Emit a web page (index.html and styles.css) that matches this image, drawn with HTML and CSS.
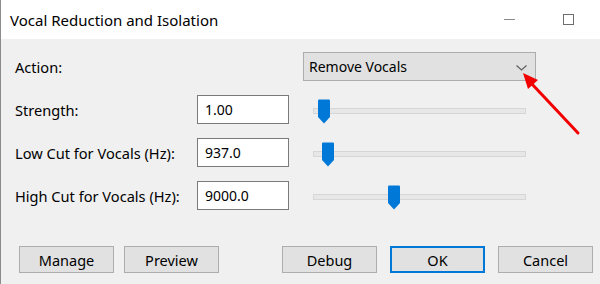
FILE: index.html
```html
<!DOCTYPE html>
<html lang="en">
<head>
  <meta charset="UTF-8">
  <title>Vocal Reduction and Isolation</title>
  <link rel="stylesheet" href="styles.css">
</head>
<body>
  <div class="dialog">
    <!-- Title bar -->
    <div class="titlebar">
      <span class="title">Vocal Reduction and Isolation</span>
      <span class="win-btn minimize"></span>
      <span class="win-btn maximize"></span>
    </div>

    <!-- Settings -->
    <div class="settings">
      <label class="label">Action:</label>
      <div class="select">
        <span>Remove Vocals</span>
        <svg class="chevron" width="11" height="6" viewBox="0 0 11 6">
          <path d="M0.5 0.5 L5.5 5 L10.5 0.5" fill="none" stroke="#606060" stroke-width="1.2"/>
        </svg>
      </div>

      <label class="label">Strength:</label>
      <input class="field" type="text" value="1.00">
      <div class="slider">
        <div class="track"></div>
        <svg class="thumb" style="left: 4px" width="14" height="25" viewBox="0 0 14 25"><path d="M1 1.5 Q1 0.5 2 0.5 H12 Q13 0.5 13 1.5 V18 L7 24.5 L1 18 Z" fill="#0078d7"/></svg>
      </div>

      <label class="label">Low Cut for Vocals (Hz):</label>
      <input class="field" type="text" value="937.0">
      <div class="slider">
        <div class="track"></div>
        <svg class="thumb" style="left: 8px" width="14" height="25" viewBox="0 0 14 25"><path d="M1 1.5 Q1 0.5 2 0.5 H12 Q13 0.5 13 1.5 V18 L7 24.5 L1 18 Z" fill="#0078d7"/></svg>
      </div>

      <label class="label">High Cut for Vocals (Hz):</label>
      <input class="field" type="text" value="9000.0">
      <div class="slider">
        <div class="track"></div>
        <svg class="thumb" style="left: 74px" width="14" height="25" viewBox="0 0 14 25"><path d="M1 1.5 Q1 0.5 2 0.5 H12 Q13 0.5 13 1.5 V18 L7 24.5 L1 18 Z" fill="#0078d7"/></svg>
      </div>
    </div>

    <!-- Buttons -->
    <div class="footer">
      <div class="group">
        <button class="btn">Manage</button>
        <button class="btn">Preview</button>
      </div>
      <div class="group right">
        <button class="btn">Debug</button>
        <button class="btn default">OK</button>
        <button class="btn">Cancel</button>
      </div>
    </div>

    <!-- Red annotation arrow -->
    <svg class="annotation" width="600" height="284" viewBox="0 0 600 284">
      <line x1="578" y1="133" x2="531" y2="83" stroke="#f20000" stroke-width="3" stroke-linecap="round"/>
      <polygon points="523,73 528,89 538,80" fill="#f20000"/>
    </svg>
  </div>
</body>
</html>
```

FILE: styles.css
```css
body {
  margin: 0;
  font-family: 'Noto Sans', 'Open Sans', sans-serif;
  background: #f0f0f0;
}

.dialog {
  position: relative;
  width: 599px;
  height: 284px;
  border-left: 1px solid #8c8c8c;
  background: #f0f0f0;
  overflow: hidden;
}

.titlebar {
  height: 39px;
  background: #ffffff;
  display: flex;
  align-items: center;
  padding-left: 9px;
}

.title {
  flex: 1;
  font-size: 15px;
  color: #000000;
}

.win-btn {
  display: block;
  box-sizing: border-box;
}

.minimize {
  width: 11px;
  height: 1px;
  background: #8a8a8a;
  margin-right: 48px;
}

.maximize {
  width: 11px;
  height: 11px;
  border: 1px solid #6e6e6e;
  margin-right: 26px;
  margin-top: -1px;
}

.settings {
  display: grid;
  grid-template-columns: 182px 92px 1fr;
  grid-auto-rows: 29px;
  row-gap: 14px;
  padding: 13px 0 0 14px;
  align-items: center;
}

.label {
  font-size: 14.6px;
  color: #000000;
  grid-column: 1;
}

.select {
  grid-column: 2 / 4;
  margin-left: 106px;
  width: 233px;
  height: 29px;
  box-sizing: border-box;
  background: #e1e1e1;
  border: 1px solid #adadad;
  display: flex;
  align-items: center;
  justify-content: space-between;
  padding: 0 8px 0 5px;
  font-size: 14px;
  color: #000000;
}

.chevron {
  margin-top: 2px;
}

.field {
  width: 92px;
  height: 29px;
  box-sizing: border-box;
  margin: 0;
  border: 1px solid #7a7a7a;
  background: #ffffff;
  padding: 0 7px;
  font-family: inherit;
  font-size: 14px;
  color: #000000;
  outline: none;
}

.slider {
  position: relative;
  margin-left: 24px;
  width: 213px;
  height: 29px;
}

.track {
  position: absolute;
  left: 0;
  right: 0;
  top: 13px;
  height: 4px;
  background: #e7e7e7;
  border: 1px solid #d6d6d6;
}

.thumb {
  position: absolute;
  top: 4px;
}

.footer {
  display: flex;
  justify-content: space-between;
  padding: 36px 7px 0 18px;
}

.group {
  display: flex;
  gap: 10px;
}

.group.right {
  gap: 13px;
}

.btn {
  width: 95px;
  height: 27px;
  box-sizing: border-box;
  margin: 0;
  background: #e1e1e1;
  border: 1px solid #adadad;
  font-family: inherit;
  font-size: 14.5px;
  color: #000000;
  padding: 0;
}

.btn.default {
  border: 2px solid #0078d7;
}

.annotation {
  position: absolute;
  left: -1px;
  top: 0;
  pointer-events: none;
}
```
